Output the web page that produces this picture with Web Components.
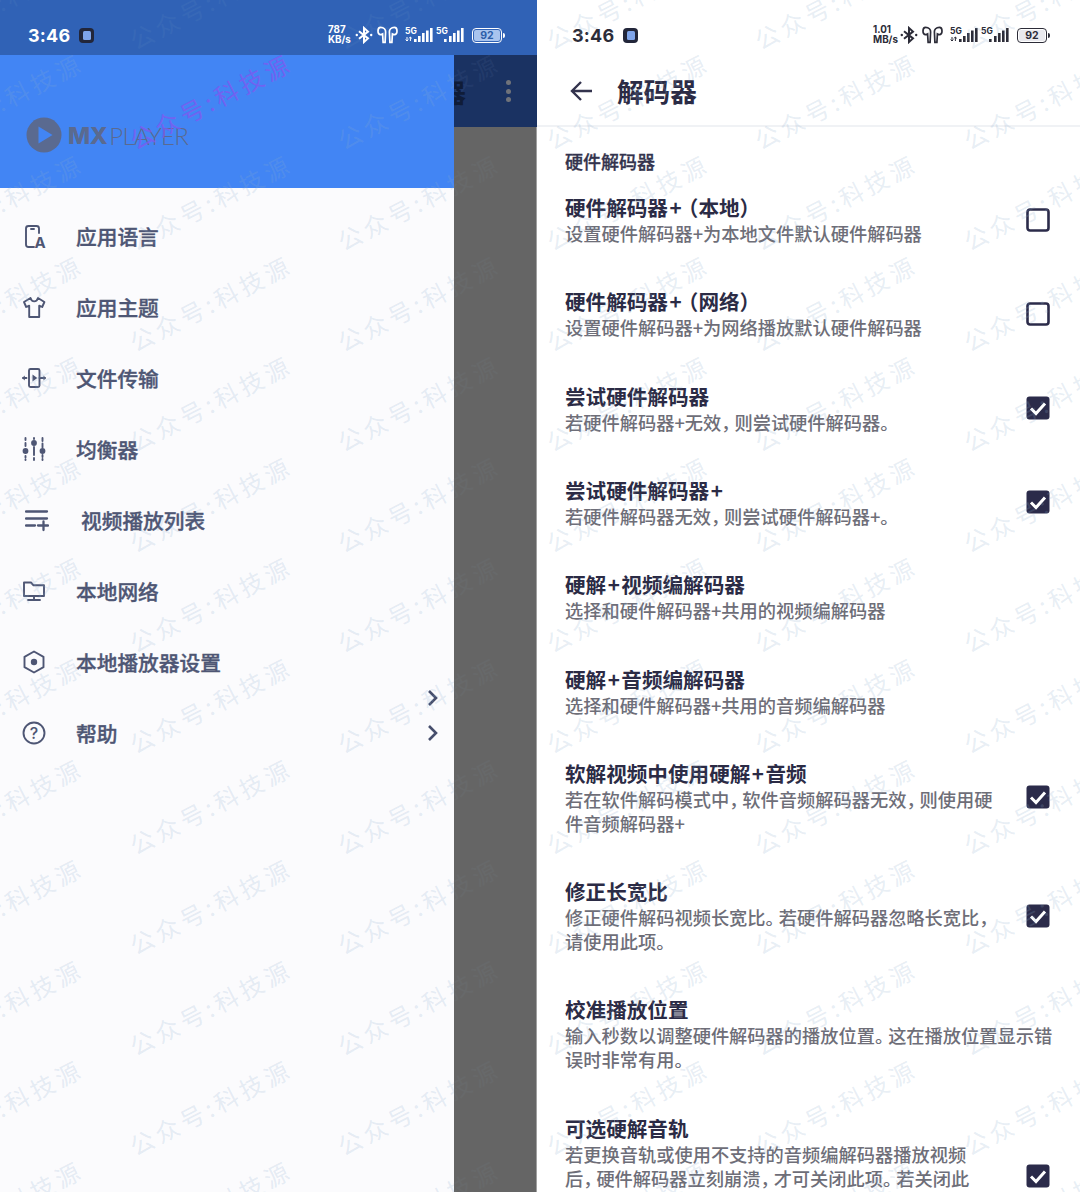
<!DOCTYPE html>
<html lang="zh">
<head>
<meta charset="utf-8">
<title>解码器</title>
<style>
  html, body { margin: 0; padding: 0; }
  body {
    position: relative;
    width: 1080px;
    height: 1192px;
    overflow: hidden;
    background: #fff;
    font-family: "Noto Sans CJK SC", "Noto Sans", sans-serif;
  }
  .page { display: flex; width: 1080px; height: 1192px; }
  /* mid-line punctuation sits tight in the reference */
  codec-pref i { font-style: normal; font-feature-settings: "halt"; letter-spacing: 4px; }
</style>
</head>
<body>
<div class="page">
  <drawer-screen>
    <status-bar slot="status" time="3:46" speed="787" unit="KB/s" style="--fg:#fff;--bg:rgba(48,99,182,.6);--batt:#a9c4ee;--batt-fg:#2d5ea9;--pad-l:28px;--pad-r:32px;position:relative;z-index:1"></status-bar>
    <drawer-item label="应用语言" icon="lang"></drawer-item>
    <drawer-item label="应用主题" icon="shirt"></drawer-item>
    <drawer-item label="文件传输" icon="transfer"></drawer-item>
    <drawer-item label="均衡器" icon="eq"></drawer-item>
    <drawer-item label="视频播放列表" icon="playlist" shift></drawer-item>
    <drawer-item label="本地网络" icon="folder"></drawer-item>
    <drawer-item label="本地播放器设置" icon="hex" chevron="low"></drawer-item>
    <drawer-item label="帮助" icon="help" chevron="mid"></drawer-item>
  </drawer-screen>
  <codec-screen>
    <status-bar slot="status" time="3:46" speed="1.01" unit="MB/s" style="--fg:#2c2c38;--bg:transparent;--batt:#e9e9ee;--batt-fg:#2c2c38;--pad-l:35px;--pad-r:30px"></status-bar>
    <codec-pref title="硬件解码器+（本地）">设置硬件解码器+为本地文件默认硬件解码器</codec-pref>
    <codec-pref title="硬件解码器+（网络）">设置硬件解码器+为网络播放默认硬件解码器</codec-pref>
    <codec-pref title="尝试硬件解码器" checked>若硬件解码器+无效<i>，</i>则尝试硬件解码器。</codec-pref>
    <codec-pref title="尝试硬件解码器+" checked>若硬件解码器无效<i>，</i>则尝试硬件解码器+。</codec-pref>
    <codec-pref title="硬解+视频编解码器" plain>选择和硬件解码器+共用的视频编解码器</codec-pref>
    <codec-pref title="硬解+音频编解码器" plain>选择和硬件解码器+共用的音频编解码器</codec-pref>
    <codec-pref title="软解视频中使用硬解+音频" checked>若在软件解码模式中<i>，</i>软件音频解码器无效<i>，</i>则使用硬件音频解码器+</codec-pref>
    <codec-pref title="修正长宽比" checked>修正硬件解码视频长宽比<i>。</i>若硬件解码器忽略长宽比，请使用此项。</codec-pref>
    <codec-pref title="校准播放位置" plain>输入秒数以调整硬件解码器的播放位置<i>。</i>这在播放位置显示错误时非常有用。</codec-pref>
    <codec-pref title="可选硬解音轨" checked tall>若更换音轨或使用不支持的音频编解码器播放视频<br>后<i>，</i>硬件解码器立刻崩溃<i>，</i>才可关闭此项<i>。</i>若关闭此</codec-pref>
  </codec-screen>
</div>
<water-mark></water-mark>

<script>
const CJK = '"Noto Sans CJK SC", "Noto Sans", sans-serif';

class StatusBar extends HTMLElement {
  connectedCallback() {
    const time = this.getAttribute('time');
    const speed = this.getAttribute('speed');
    const unit = this.getAttribute('unit');
    const signal = (dual) => `
      <svg width="31" height="16" viewBox="0 0 31 16">
        <text x="0" y="7" font-size="8.500" font-weight="700" font-family="Inter, sans-serif" fill="currentColor">5G</text>
        ${dual ? '<path d="M2 10v4M0.600 12.600 2 14l1.400-1.400M5.400 14v-4M4 11.400l1.400-1.400 1.400 1.400" stroke="currentColor" stroke-width="1" fill="none"/>' : ''}
        <rect x="${dual ? 9 : 8}" y="12" width="2.600" height="3" fill="currentColor"/>
        <rect x="13" y="9" width="2.600" height="6" fill="currentColor"/>
        <rect x="17" y="6" width="2.600" height="9" fill="currentColor"/>
        <rect x="21" y="3.500" width="2.600" height="11.500" fill="currentColor"/>
        <rect x="25" y="1" width="2.600" height="14" fill="currentColor"/>
      </svg>`;
    this.attachShadow({ mode: 'open' }).innerHTML = `
      <style>
        :host {
          display: flex;
          align-items: center;
          box-sizing: border-box;
          height: 55px;
          padding: 17px var(--pad-r) 2px var(--pad-l);
          color: var(--fg);
          background: var(--bg);
          font-family: Inter, "Liberation Sans", sans-serif;
        }
        .time { font-size: 18px; font-weight: 700; letter-spacing: .2px; width: 51px; }
        .app {
          display: flex; align-items: center; justify-content: center;
          width: 15px; height: 15px; border-radius: 4px; background: #22263a;
        }
        .app i { display: block; width: 8px; height: 9px; border-radius: 1.500px; background: #7ea4ea; }
        .right { margin-left: auto; display: flex; align-items: center; }
        .speed { font-size: 9.800px; font-weight: 700; line-height: 10px; width: 27px; white-space: nowrap; }
        .batt {
          box-sizing: border-box; width: 30px; height: 15px; margin-left: 5px;
          border: 1.400px solid currentColor; border-radius: 4px; padding: 1px;
          display: flex;
        }
        .batt span {
          flex: 1; border-radius: 2px; background: var(--batt); color: var(--batt-fg);
          font-size: 10.500px; font-weight: 700; line-height: 11px; text-align: center;
        }
        .nub { width: 2px; height: 5px; background: currentColor; border-radius: 0 2px 2px 0; margin-left: 1px; }
        svg { display: block; }
      </style>
      <span class="time">${time}</span>
      <span class="app"><i></i></span>
      <div class="right">
        <span class="speed">${speed}<br>${unit}</span>
        <svg width="18" height="18" viewBox="0 0 18 18" fill="none" stroke="currentColor" stroke-width="2" style="margin:0 4px 0 0">
          <path d="M4 5.200 13 12.400 9 16V2l4 3.600L4 12.800"/>
          <circle cx="1.800" cy="9" r="1.200" fill="currentColor" stroke="none"/><circle cx="16.200" cy="9" r="1.200" fill="currentColor" stroke="none"/>
        </svg>
        <svg width="21" height="18" viewBox="0 0 21 18" fill="none" stroke="currentColor" stroke-width="1.700" style="margin-right:7px">
          <path d="M3.600 1.400C1.900 1.400 1 3 1 5s1 3.600 2.600 3.600c.8 0 1.400-.2 2-.6l.5 8.400h2L8.600 6c.2-2.500-1.700-4.600-5-4.600Z"/>
          <path d="M17.400 1.400C19.100 1.400 20 3 20 5s-1 3.600-2.600 3.600c-.8 0-1.400-.2-2-.6l-.5 8.400h-2L12.400 6c-.2-2.500 1.700-4.600 5-4.600Z"/>
        </svg>
        ${signal(true)}${signal(false)}
        <span class="batt"><span>92</span></span><span class="nub"></span>
      </div>`;
  }
}
customElements.define('status-bar', StatusBar);

const ICONS = {
  lang: `<path d="M17 9V4.500A2.500 2.500 0 0 0 14.500 2h-8A2.500 2.500 0 0 0 4 4.500v16A2.500 2.500 0 0 0 6.500 23H12M9 5h3"/><text x="12.500" y="24" font-size="15" font-weight="700" font-family="Inter, sans-serif" fill="currentColor" stroke="none">A</text>`,
  shirt: `<path d="M8.500 3 2 7l2.200 5 3-1.300V22h10V10.700l3 1.300L22.400 7 16 3c-.6 2.300-2 3.400-3.800 3.400S9.100 5.300 8.500 3Z"/>`,
  transfer: `<rect x="7" y="3" width="10.500" height="18" rx="1.500"/><path d="M10.500 8.500v7l4.800-3.500z" fill="currentColor" stroke="none"/><path d="M1 12h3.500M17.500 12H23" stroke-width="1.800"/><path d="M2.800 9.500 0 12l2.800 2.500zM21.500 9.500 24 12l-2.500 2.500z" fill="currentColor" stroke="none"/>`,
  eq: `<path d="M3.500 1v2M3.500 6v3M3.500 19v1.500M3.500 22.500v.5M12 1v1M12 10v8M12 21v2M20.500 1v3M20.500 6.500v4M20.500 18v2M20.500 22v1" stroke-width="1.900"/><circle cx="3.500" cy="14" r="2.900" fill="currentColor" stroke="none"/><circle cx="12" cy="6" r="2.900" fill="currentColor" stroke="none"/><circle cx="20.500" cy="14" r="2.900" fill="currentColor" stroke="none"/>`,
  playlist: `<path d="M1 3.500h21M1 10.500h21M1 17.500h9M13 17.500h10M18.500 13.500v8.500" stroke-width="2.300"/>`,
  folder: `<path d="M2 17V3.500h7l2.500 2.800H22V17ZM12 17v3.500M6 21h12"/>`,
  hex: `<path d="M12 1.500 21.500 6.800v10.400L12 22.500 2.500 17.200V6.800Z"/><circle cx="12" cy="12" r="3.200" fill="currentColor" stroke="none"/>`,
  help: `<circle cx="12" cy="12" r="10.500"/><text x="12" y="17.800" text-anchor="middle" font-size="16" font-weight="500" font-family="Inter, sans-serif" fill="currentColor" stroke="none">?</text>`
};

const CHEVRON = `<svg width="12" height="18" viewBox="0 0 12 18" fill="none" stroke="#464e6c" stroke-width="2.600"><path d="M2 2l7 7-7 7"/></svg>`;

class DrawerItem extends HTMLElement {
  connectedCallback() {
    const chevron = this.getAttribute('chevron');
    this.attachShadow({ mode: 'open' }).innerHTML = `
      <style>
        :host {
          display: flex;
          align-items: center;
          position: relative;
          height: 71px;
          padding: 0 15px 0 22px;
          color: #4e5674;
        }
        :host([shift]) { padding-left: 25px; }
        :host([shift]) .label { margin-left: 32px; }
        svg.icon { flex: none; margin-top: 1px; }
        .label { margin-left: 30px; font: 500 20.700px ${CJK}; -webkit-text-stroke: .35px currentColor; }
        .chev { margin-left: auto; display: flex; }
        .chev.low { transform: translateY(36px); }
      </style>
      <svg class="icon" width="24" height="24" viewBox="0 0 24 24" fill="none" stroke="currentColor" stroke-width="1.900" stroke-linejoin="round" stroke-linecap="round">${ICONS[this.getAttribute('icon')]}</svg>
      <span class="label">${this.getAttribute('label')}</span>
      ${chevron ? `<span class="chev ${chevron}">${CHEVRON}</span>` : ''}`;
  }
}
customElements.define('drawer-item', DrawerItem);

class DrawerScreen extends HTMLElement {
  connectedCallback() {
    this.attachShadow({ mode: 'open' }).innerHTML = `
      <style>
        /* the base colours sit under the stamp, the scrim over it, so the stamp stays faint there */
        :host {
          display: flex; flex-direction: column; width: 537px; flex: none; height: 1192px;
          background: linear-gradient(#3063b6 55px, #1a3263 55px, #1a3263 127px, #666 127px);
        }
        .body { flex: 1; display: flex; min-height: 0; }
        .drawer { width: 454px; display: flex; flex-direction: column; background: #fbfbfd; }
        .head {
          height: 133px; box-sizing: border-box; background: #4285f4;
          display: flex; align-items: center; padding: 27px 0 0 26px;
        }
        .logo { display: flex; align-items: center; color: #5a6a90; }
        .mx { font: 800 23.500px Inter, sans-serif; margin-left: 6px; letter-spacing: -.4px; }
        .player { font: 300 24px Lato, sans-serif; margin-left: 2px; letter-spacing: -.7px; }
        .menu { padding-top: 12px; }
        .scrim {
          flex: 1; display: flex; flex-direction: column; overflow: hidden;
          position: relative; z-index: 1;
        }
        .bar {
          height: 72px; background: rgba(26, 50, 99, .6); display: flex; align-items: center;
          color: #0f1c38; overflow: hidden;
        }
        .shade { flex: 1; background: rgba(102, 102, 102, .75); border-right: 1px solid #a0a0a0; }
        .bar b { font: 700 26px ${CJK}; margin-left: -14px; }
        .dots { margin-left: 40px; display: flex; flex-direction: column; gap: 3.500px; }
        .dots i { width: 5px; height: 5px; border-radius: 50%; background: #70737a; }
      </style>
      <slot name="status"></slot>
      <div class="body">
        <div class="drawer">
          <div class="head">
            <div class="logo">
              <svg width="36" height="36" viewBox="0 0 36 36"><circle cx="18" cy="18" r="17.500" fill="#5a6a90"/><path d="M12.500 9.500 26.500 18 12.500 26.500Z" fill="#4285f4"/></svg>
              <span class="mx">MX</span><span class="player">PLAYER</span>
            </div>
          </div>
          <div class="menu"><slot></slot></div>
        </div>
        <div class="scrim">
          <div class="bar"><b>器</b><span class="dots"><i></i><i></i><i></i></span></div>
          <div class="shade"></div>
        </div>
      </div>`;
  }
}
customElements.define('drawer-screen', DrawerScreen);

class CodecPref extends HTMLElement {
  connectedCallback() {
    const checked = this.hasAttribute('checked');
    const plain = this.hasAttribute('plain');
    const box = plain ? '' : `
      <svg class="box" width="24" height="24" viewBox="0 0 24 24">
        ${checked
          ? '<rect x=".5" y=".5" width="23" height="23" rx="3" fill="#2b2b4a"/><path d="M5 12.500 10 17.500l9-10" fill="none" stroke="#fff" stroke-width="3"/>'
          : '<rect x="1.500" y="1.500" width="21" height="21" rx="2.500" fill="none" stroke="#2b2b4a" stroke-width="2.600"/>'}
      </svg>`;
    // the plus sign is set a little wider in the titles, the bracket narrower
    const title = this.getAttribute('title')
      .replace('+', '<span class="plus">+</span>')
      .replace('（', '<span class="open">（</span>');
    this.attachShadow({ mode: 'open' }).innerHTML = `
      <style>
        :host {
          display: flex;
          align-items: center;
          justify-content: space-between;
          padding: 21.600px 30px 21.700px 28px;
        }
        :host([plain]) { padding-right: 20px; }
        .text { width: ${plain ? '495px' : '434px'}; }
        :host([tall]) .sub { min-height: 96px; }
        .title { font: 700 20.600px/27px ${CJK}; color: #2b2b45; }
        .plus { margin: 0 1.500px; }
        .open { font-feature-settings: "halt"; margin-left: 5px; }
        .sub { font: 500 18.240px/24px ${CJK}; color: #6e6e78; }
        .box { flex: none; }
      </style>
      <div class="text">
        <div class="title">${title}</div>
        <div class="sub"><slot></slot></div>
      </div>${box}`;
  }
}
customElements.define('codec-pref', CodecPref);

class CodecScreen extends HTMLElement {
  connectedCallback() {
    this.attachShadow({ mode: 'open' }).innerHTML = `
      <style>
        :host { display: block; flex: 1; height: 1192px; background: #fff; overflow: hidden; }
        .bar {
          height: 72px; box-sizing: border-box; display: flex; align-items: center;
          padding: 1px 0 0 32px; border-bottom: 2px solid #f0f2f5;
        }
        h1 { margin: 0 0 0 24px; font: 700 26.600px ${CJK}; color: #2b2b45; }
        h2 { margin: 0; padding: 22px 0 0 28px; font: 500 18px/24px ${CJK}; color: #33334d; height: 23.500px; -webkit-text-stroke: .3px currentColor; }
      </style>
      <slot name="status"></slot>
      <div class="bar">
        <svg width="24" height="24" viewBox="0 0 24 24" fill="none" stroke="#33334d" stroke-width="2.400"><path d="M23 12H3M12 3l-9 9 9 9"/></svg>
        <h1>解码器</h1>
      </div>
      <h2>硬件解码器</h2>
      <slot></slot>`;
  }
}
customElements.define('codec-screen', CodecScreen);

// repeated tilted stamp lying over the whole picture
class WaterMark extends HTMLElement {
  connectedCallback() {
    const root = this.attachShadow({ mode: 'open' });
    let cells = '';
    for (let row = 0; row < 13; row++) {
      for (let col = 0; col < 6; col++) {
        const purple = row === 1 && col === 1;
        cells += `<span class="cell${purple ? ' purple' : ''}"><b>公众号:科技源</b></span>`;
      }
    }
    root.innerHTML = `
      <style>
        :host {
          position: absolute; inset: 0; overflow: hidden; pointer-events: none; display: block;
        }
        .grid {
          display: grid;
          grid-template-columns: repeat(6, 208.500px);
          grid-auto-rows: 100.600px;
          margin: -50px 0 0 -102.750px;
        }
        .cell { display: flex; align-items: center; justify-content: center; }
        b {
          flex: none;
          font: 400 24px ${CJK};
          letter-spacing: 4px;
          white-space: nowrap;
          color: rgba(140, 172, 205, .21);
          transform: rotate(-27deg);
        }
        .purple b { color: rgba(125, 90, 240, .8); }
      </style>
      <div class="grid">${cells}</div>`;
  }
}
customElements.define('water-mark', WaterMark);
</script>
</body>
</html>
